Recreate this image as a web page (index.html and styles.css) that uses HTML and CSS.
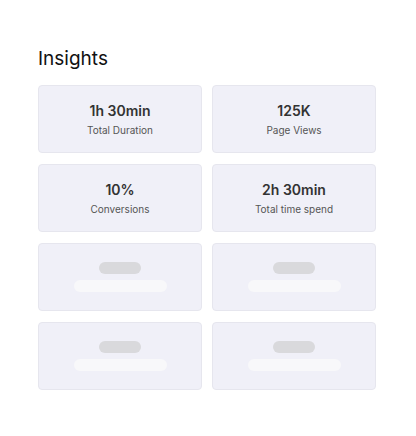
FILE: index.html
```html
<!DOCTYPE html>
<html lang="en">
<head>
    <meta charset="UTF-8">
    <meta name="viewport" content="width=device-width, initial-scale=1.0">
    <title>Insights</title>
    <link rel="stylesheet" href="styles.css">
</head>
<body>
    <div class="insights">
        <h1>Insights</h1>

        <div class="grid">
            <div class="card">
                <div class="value">1h 30min</div>
                <div class="label">Total Duration</div>
            </div>
            <div class="card">
                <div class="value">125K</div>
                <div class="label">Page Views</div>
            </div>
            <div class="card">
                <div class="value">10%</div>
                <div class="label">Conversions</div>
            </div>
            <div class="card">
                <div class="value">2h 30min</div>
                <div class="label">Total time spend</div>
            </div>

            <!-- loading placeholders -->
            <div class="card skeleton">
                <div class="pill"></div>
                <div class="bar"></div>
            </div>
            <div class="card skeleton">
                <div class="pill"></div>
                <div class="bar"></div>
            </div>
            <div class="card skeleton">
                <div class="pill"></div>
                <div class="bar"></div>
            </div>
            <div class="card skeleton">
                <div class="pill"></div>
                <div class="bar"></div>
            </div>
        </div>
    </div>
</body>
</html>
```

FILE: styles.css
```css
body {
    margin: 0;
    background: #fff;
    font-family: Inter, "Noto Sans", sans-serif;
    color: #222;
}
.insights {
    padding: 46px 40px 0 38px;
}
h1 {
    font-size: 19px;
    font-weight: 400;
    margin: 0 0 13px 0;
    line-height: 26px;
    color: #111;
}
.grid {
    display: grid;
    grid-template-columns: 164px 164px;
    column-gap: 10px;
    row-gap: 11px;
}
.card {
    height: 68px;
    box-sizing: border-box;
    background-color: #f0f0f8;
    border: 1px solid #e6e6ee;
    border-radius: 4px;
    display: flex;
    flex-direction: column;
    align-items: center;
    justify-content: center;
}
.value {
    font-size: 14px;
    font-weight: 600;
    color: #333;
    line-height: 18px;
}
.label {
    font-size: 10px;
    color: #555;
    margin-top: 4px;
    line-height: 13px;
}
.skeleton {
    gap: 6px;
}
.pill {
    width: 42px;
    height: 12px;
    border-radius: 6px;
    background: #d9d9dc;
}
.bar {
    width: 93px;
    height: 12px;
    border-radius: 6px;
    background: #f8f8fa;
}
```
